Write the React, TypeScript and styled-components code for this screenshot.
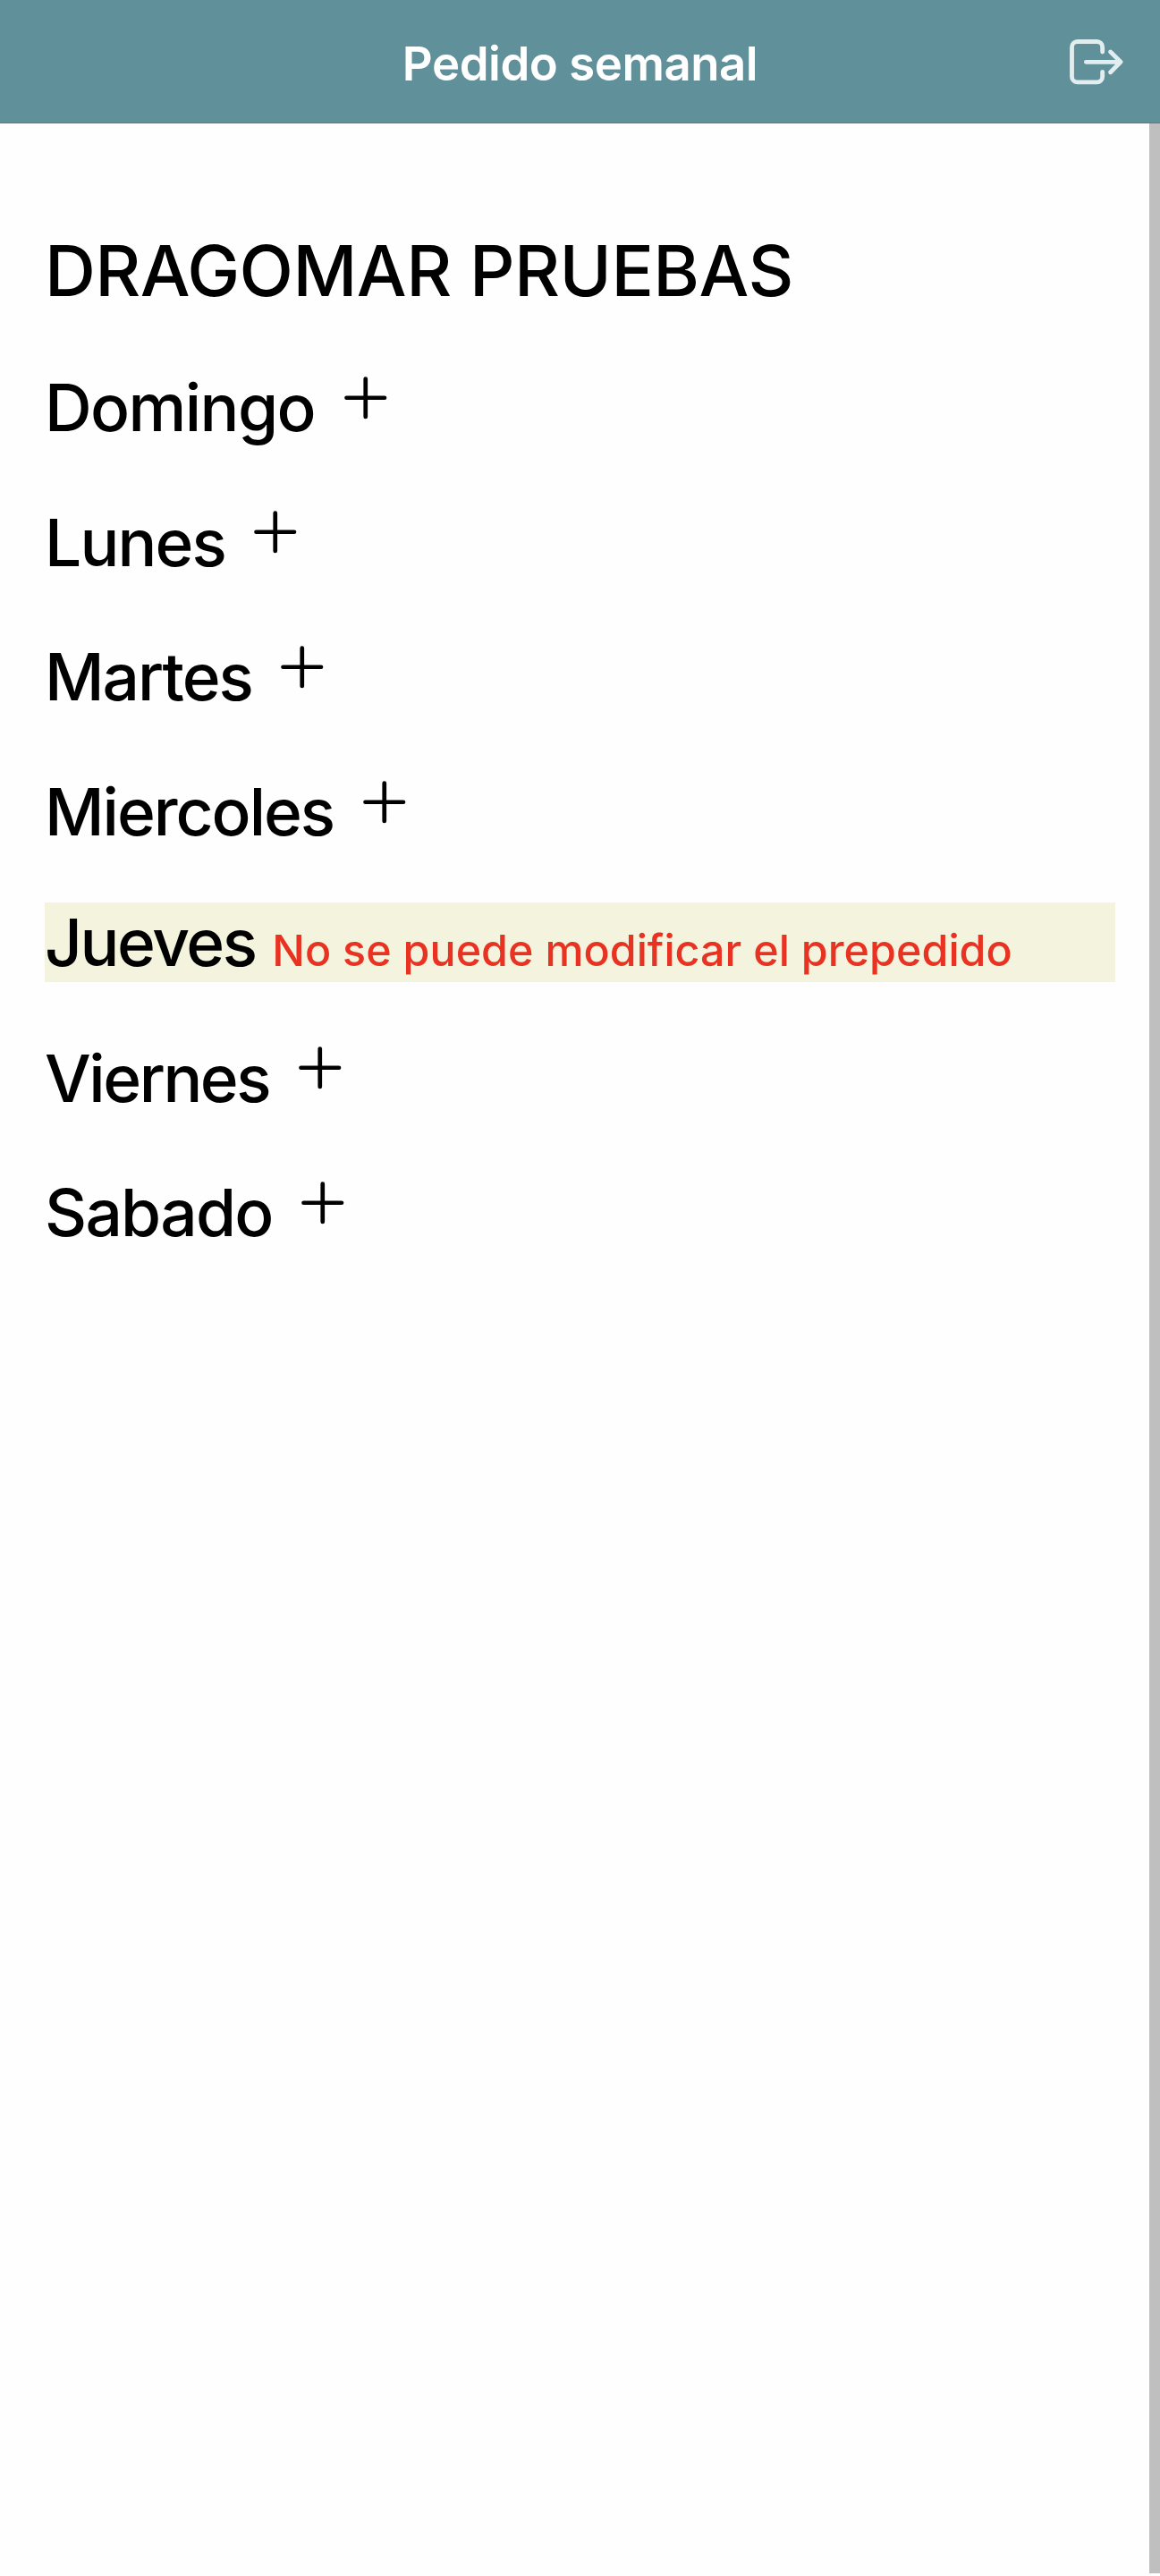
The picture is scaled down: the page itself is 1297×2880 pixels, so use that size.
import React from 'react';
import styled, { createGlobalStyle } from 'styled-components';

const GlobalStyle = createGlobalStyle`
  * { box-sizing: border-box; }
  body { margin: 0; background: #fefefe; }
`;

const Page = styled.div`
  display: flex;
  flex-direction: column;
  height: 2880px;
  color: #000;
  font-family: Inter, "Liberation Sans", sans-serif;
`;

const Header = styled.header`
  display: grid;
  grid-template-columns: 1fr auto 1fr;
  align-items: center;
  flex: none;
  height: 138px;
  padding: 0 41px;
  background: #60919b;
  border-bottom: 1px solid #4f7f89;
`;

const Title = styled.h1`
  grid-column: 2;
  margin: 5px 0 0;
  color: #fff;
  font-size: 52.7px;
  font-weight: 600;
  line-height: 64px;
  letter-spacing: -0.45px;
  white-space: nowrap;
`;

const ExitButton = styled.button`
  display: flex;
  justify-self: end;
  margin-top: 2px;
  padding: 0;
  border: 0;
  background: none;
  color: #e2edf0;
`;

const Body = styled.div`
  display: flex;
  flex: 1;
  min-height: 0;
`;

const Content = styled.main`
  flex: 1;
  min-width: 0;
  padding: 117px 38px 0 50px;
`;

const Company = styled.h2`
  margin: 0;
  font-size: 78.8px;
  font-weight: 500;
  line-height: 96px;
  letter-spacing: -0.55px;
  white-space: nowrap;
`;

const Days = styled.div`
  display: flex;
  flex-direction: column;
  gap: 58px;
  margin-top: 55.5px;
`;

const DayRow = styled.div<{ $locked?: boolean }>`
  display: flex;
  align-items: baseline;
  height: ${(p) => (p.$locked ? '89px' : '92.7px')};
  background: ${(p) => (p.$locked ? '#f4f4de' : 'transparent')};
  white-space: nowrap;
`;

const DayName = styled.span<{ $tracking: number }>`
  font-size: 73px;
  font-weight: 500;
  line-height: 89px;
  letter-spacing: ${(p) => p.$tracking}px;
`;

const Notice = styled.span`
  margin-left: 18.5px;
  color: #e83323;
  font-size: 48.4px;
  font-weight: 500;
  line-height: 58px;
  letter-spacing: 0.03px;
`;

const PlusIcon = styled.svg`
  flex: none;
  width: 75.5px;
  height: 75.5px;
  margin-left: 18.5px;
`;

const Scrollbar = styled.div`
  flex: none;
  width: 12.5px;
  height: 2739px;
  background: #bfbfbf;
`;

const days = [
  { name: 'Domingo', tracking: -1.6 },
  { name: 'Lunes', tracking: -1.9 },
  { name: 'Martes', tracking: -2 },
  { name: 'Miercoles', tracking: -2.05 },
  { name: 'Jueves', tracking: -2.4, notice: 'No se puede modificar el prepedido' },
  { name: 'Viernes', tracking: -2.45 },
  { name: 'Sabado', tracking: -1.75 },
];

export default function App() {
  return (
    <>
      <GlobalStyle />
      <Page>
        <Header>
          <Title>Pedido semanal</Title>
          <ExitButton aria-label="Salir">
            <svg width="60" height="51" viewBox="148 132 180 153" fill="none" stroke="currentColor" strokeWidth="14.5" strokeLinecap="round" strokeLinejoin="round">
              <path d="M258 174v-16a18.500 18.500 0 0 0-18.500-18.500h-65.500a18.500 18.500 0 0 0-18.500 18.500v99a18.500 18.500 0 0 0 18.500 18.500h65.500a18.500 18.500 0 0 0 18.500-18.500v-16" />
              <path d="M203 208h115.500M285 174l34 34-34 34" />
            </svg>
          </ExitButton>
        </Header>
        <Body>
          <Content>
            <Company>DRAGOMAR PRUEBAS</Company>
            <Days>
              {days.map((day) => (
                <DayRow key={day.name} $locked={!!day.notice}>
                  <DayName $tracking={day.tracking}>{day.name}</DayName>
                  {day.notice ? (
                    <Notice>{day.notice}</Notice>
                  ) : (
                    <PlusIcon viewBox="0 0 512 512" fill="none" stroke="currentColor" strokeWidth="32" strokeLinecap="round">
                      <path d="M256 112v288M400 256H112" />
                    </PlusIcon>
                  )}
                </DayRow>
              ))}
            </Days>
          </Content>
          <Scrollbar />
        </Body>
      </Page>
    </>
  );
}
